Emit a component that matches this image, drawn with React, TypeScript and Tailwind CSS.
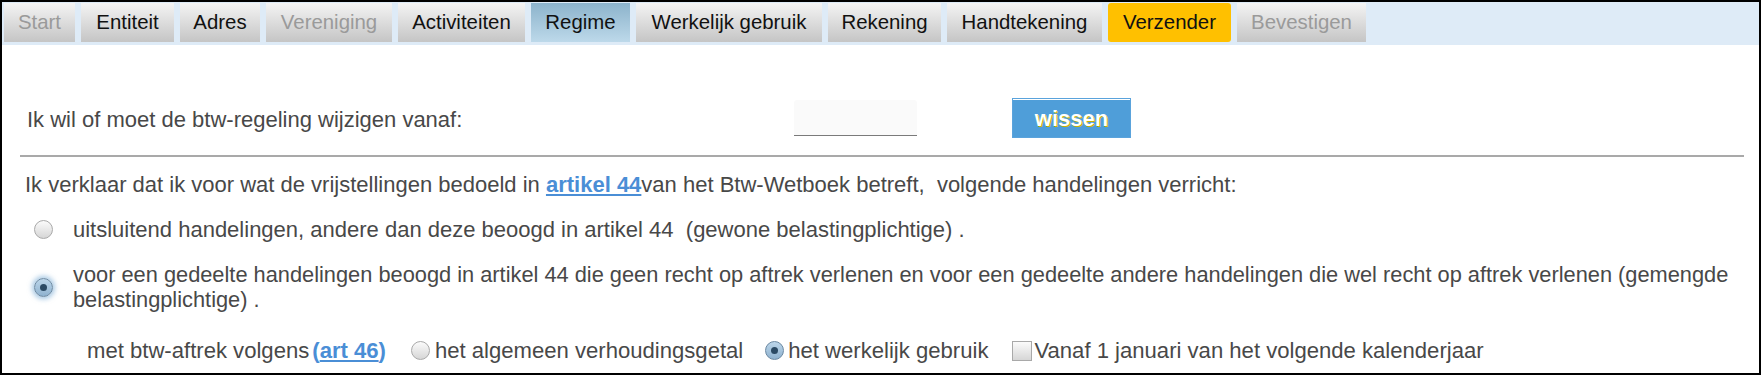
type Tab = {
  label: string;
  width: string;
  kind: 'normal' | 'disabled' | 'active' | 'current';
};

const TABS: Tab[] = [
  { label: 'Start', width: 'w-[71px]', kind: 'disabled' },
  { label: 'Entiteit', width: 'w-[93px]', kind: 'normal' },
  { label: 'Adres', width: 'w-[80px]', kind: 'normal' },
  { label: 'Vereniging', width: 'w-[126px]', kind: 'disabled' },
  { label: 'Activiteiten', width: 'w-[127px]', kind: 'normal' },
  { label: 'Regime', width: 'w-[99px]', kind: 'active' },
  { label: 'Werkelijk gebruik', width: 'w-[186px]', kind: 'normal' },
  { label: 'Rekening', width: 'w-[113px]', kind: 'normal' },
  { label: 'Handtekening', width: 'w-[155px]', kind: 'normal' },
  { label: 'Verzender', width: 'w-[123px]', kind: 'current' },
  { label: 'Bevestigen', width: 'w-[129px]', kind: 'disabled' },
];

const TAB_STYLE: Record<Tab['kind'], string> = {
  normal: 'bg-gradient-to-b from-[#f4f4f4] to-[#c5c5c5] text-[#111]',
  disabled: 'bg-gradient-to-b from-[#f4f4f4] to-[#c5c5c5] text-[#9a9a9a]',
  active: 'bg-gradient-to-b from-[#8cb3cb] to-[#bdd9ea] text-[#111]',
  current: 'bg-[#ffc000] rounded-[3px] text-[#111]',
};

function Radio({ checked, glow }: { checked?: boolean; glow?: boolean }) {
  if (checked) {
    return (
      <span
        className={`flex items-center justify-center w-[19px] h-[19px] shrink-0 rounded-full border border-[#6a88a2] bg-gradient-to-b from-[#bcd6ea] to-[#8fb2cf] ${
          glow ? 'shadow-[0_0_5px_2px_rgba(110,165,210,0.6)]' : ''
        }`}
      >
        <span className="w-[7px] h-[7px] rounded-full bg-[#2b4a64]" />
      </span>
    );
  }
  return (
    <span className="block w-[19px] h-[19px] shrink-0 rounded-full border border-[#a9a9a9] bg-gradient-to-b from-[#fbfbfb] to-[#d6d6d6]" />
  );
}

export default function App() {
  return (
    <div className="w-[1761px] h-[375px] border-2 border-black bg-white text-[22px] text-[#484848] font-['Liberation_Sans',Arial,sans-serif] overflow-hidden">
      {/* Step tabs */}
      <div className="h-[43px] bg-[#deebf7] flex gap-[6px] pl-[2px] pt-[1px]">
        {TABS.map((t) => (
          <div
            key={t.label}
            className={`h-[39px] flex items-center justify-center text-[20.4px] ${t.width} ${TAB_STYLE[t.kind]}`}
          >
            {t.label}
          </div>
        ))}
      </div>

      {/* Start date */}
      <div className="flex items-center h-[40px] mt-[53px] pl-[25px]">
        <span className="w-[767px] pt-[3px]">Ik wil of moet de btw-regeling wijzigen vanaf:</span>
        <div className="w-[123px] h-[36px] bg-[#fafafa] rounded-t-[3px] border-b border-[#7a7a7a]" />
        <button className="ml-[95px] w-[119px] h-[40px] bg-[#4f9ed9] border border-[#5aa3dc] shadow-[inset_0_1px_0_#ffffff] text-white font-bold [text-shadow:1px_1px_0_#c9b300]">
          wissen
        </button>
      </div>

      <div className="h-[2px] bg-[#a9a9a9] ml-[18px] mr-[15px] mt-[17px]" />

      {/* Declaration */}
      <div className="pl-[23px] mt-[15px] leading-[25px]">
        Ik verklaar dat ik voor wat de vrijstellingen bedoeld in{' '}
        <a className="font-bold text-[#4a8ed6] underline">artikel 44</a>van het Btw-Wetboek betreft,&nbsp; volgende handelingen verricht:
      </div>

      <div className="flex items-center mt-[20px] pl-[32px] leading-[25px]">
        <Radio />
        <span className="ml-[20px]">
          uitsluitend handelingen, andere dan deze beoogd in artikel 44&nbsp; (gewone belastingplichtige) .
        </span>
      </div>

      <div className="flex items-center mt-[20px] pl-[32px] pr-[12px] leading-[25px] text-[21.8px]">
        <Radio checked glow />
        <span className="ml-[20px]">
          voor een gedeelte handelingen beoogd in artikel 44 die geen recht op aftrek verlenen en voor een gedeelte andere handelingen die wel recht op aftrek verlenen (gemengde belastingplichtige) .
        </span>
      </div>

      <div className="flex items-center mt-[26px] pl-[85px] leading-[25px] whitespace-nowrap text-[22.1px]">
        <span>met btw-aftrek volgens</span>
        <span className="ml-[3px] font-bold text-[#4a8ed6]">
          (<a className="underline">art 46</a>)
        </span>
        <span className="ml-[25px]">
          <Radio />
        </span>
        <span className="ml-[5px]">het algemeen verhoudingsgetal</span>
        <span className="ml-[22px]">
          <Radio checked />
        </span>
        <span className="ml-[4px]">het werkelijk gebruik</span>
        <span className="ml-[24px] block w-[20px] h-[20px] border border-[#a9a9a9] bg-gradient-to-b from-[#fbfbfb] to-[#d6d6d6]" />
        <span className="ml-[2px]">Vanaf 1 januari van het volgende kalenderjaar</span>
      </div>
    </div>
  );
}
